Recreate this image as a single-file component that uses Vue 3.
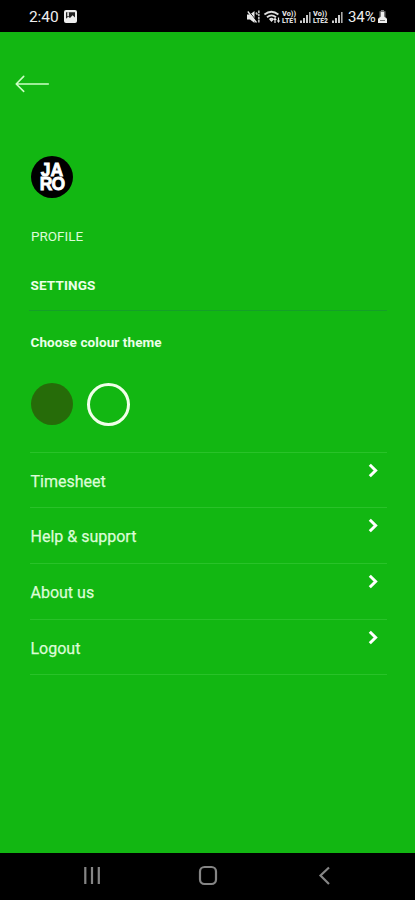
<script setup>
const items = ['Timesheet', 'Help & support', 'About us', 'Logout']
</script>

<template>
  <div class="screen">
    <header class="status">
      <span class="time">2:40</span>
      <svg class="picture" width="13" height="13" viewBox="0 0 13 13">
        <rect width="13" height="13" rx="2" fill="#eee" />
        <path d="M2 2.2h9v5.2L8.6 5.2 6 8 4.2 6.8 2 8.8z" fill="#222" />
        <path d="M3.3 2.2h1.6v4H3.3z" fill="#eee" />
      </svg>
      <svg class="indicators" width="98" height="18" viewBox="0 0 98 18" fill="#e8e8e8">
        <path d="M0 6.5h3L7.5 3v12L3 11.500H0z" />
        <path d="M1.2 2.5 10 13.5" stroke="#000" stroke-width="1" />
        <path d="M0.8 3.5 9.5 14.5" stroke="#e8e8e8" stroke-width="1.3" />
        <path d="M11.8 2.5v12M9 4.5l1.5 2.5" stroke="#bbb" stroke-width="1.7" stroke-dasharray="2.5 .7" />
        <g fill="none" stroke="#ddd" stroke-width="1.8">
          <path d="M17.4 6.5q7-5.5 14 0M20 9.2q4.5-3.7 9 0M22.5 11.6q2-1.6 4 0" />
        </g>
        <path d="M22.5 11.8h4L24.5 14zM28 9.5l1.8 2.5h-1.2v3h-1.2v-3h-1.2zM31.5 15l-1.7-2.5h1.1V9.5h1.2v3h1.1z" />
        <g class="tiny">
          <text x="35" y="8.4" textLength="14" lengthAdjust="spacingAndGlyphs">Vo))</text>
          <text x="35" y="15.2" textLength="15" lengthAdjust="spacingAndGlyphs">LTE1</text>
          <text x="66" y="8.4" textLength="14" lengthAdjust="spacingAndGlyphs">Vo))</text>
          <text x="66" y="15.2" textLength="15" lengthAdjust="spacingAndGlyphs">LTE2</text>
        </g>
        <path d="M53 12.5h2V15h-2zM56 10h2v5h-2zM59 7h2v8h-2zM85 12.5h2V15h-2zM88 10h2v5h-2zM91 7h2v8h-2z" fill="#ccc" />
        <path d="M62 4h1.6v11H62zM94 4h1.6v11H94z" fill="#aaa" />
      </svg>
      <span class="percent">34%</span>
      <svg class="battery" width="9" height="13" viewBox="0 0 9 13">
        <path d="M3 0h3v1.3h1.5V7L9 8.5V13H0V8.5L1.5 7V1.3H3z" fill="#777" />
        <path d="M3 2h3v4.5L9 9v4H0V9l3-2.5z" fill="#eee" />
        <path d="M2 10.5h5" stroke="#777" />
      </svg>
    </header>

    <main class="content">
      <svg class="back" width="36" height="20" viewBox="0 0 36 20" fill="none" stroke="#ccffc5" stroke-width="1.6" stroke-linecap="round" stroke-linejoin="round">
        <path d="M33.3 10H1.2M8.7 2.4 1.2 10l7.5 7.4" />
      </svg>
      <div class="logo"><span>JA</span><span class="lower">RO</span></div>
      <div class="profile">PROFILE</div>
      <div class="settings">SETTINGS</div>
      <div class="choose">Choose colour theme</div>
      <div class="themes">
        <span class="swatch olive"></span>
        <span class="swatch ring"></span>
      </div>
      <ul class="menu">
        <li v-for="item in items" :key="item">
          <span>{{ item }}</span>
          <svg width="11" height="15" viewBox="0 0 11 15" fill="none" stroke="#fff" stroke-width="3">
            <path d="M1.8 1.8 7.6 7.5l-5.8 5.7" />
          </svg>
        </li>
      </ul>
    </main>

    <nav class="navbar">
      <svg width="415" height="47" viewBox="0 0 415 47" fill="none" stroke="#858585" stroke-width="2.2">
        <path d="M85.3 14v17M92 14v17M98.8 14v17" />
        <rect x="200" y="14" width="16" height="17" rx="4.5" />
        <path d="M329 14.5 320.5 22.5l8.5 8.5" />
      </svg>
    </nav>
  </div>
</template>

<style>
body {
  margin: 0;
  background: #000;
}
</style>

<style scoped>
.screen {
  width: 415px;
  height: 900px;
  display: flex;
  flex-direction: column;
  overflow: hidden;
  background: #12b712;
  font-family: Roboto, sans-serif;
  color: #dcfcd7;
}
.status {
  height: 32px;
  flex: none;
  box-sizing: border-box;
  padding-left: 29px;
  display: flex;
  align-items: center;
  background: #000;
  color: #eee;
  font-size: 15.5px;
  line-height: 20px;
}
.time {
  width: 35px;
  padding-top: 2px;
  letter-spacing: -0.1px;
}
.picture {
  margin-top: 1px;
}
.indicators {
  margin-left: 170px;
  margin-top: 1px;
}
.tiny {
  font-size: 7.5px;
  font-weight: 900;
  fill: #ddd;
}
.percent {
  width: 30px;
  margin-left: 3px;
  padding-top: 2px;
  font-size: 15px;
  letter-spacing: -0.1px;
}
.battery {
  margin-top: 1px;
}
.content {
  height: 821px;
  flex: none;
  box-sizing: border-box;
  padding: 42px 28px 0 31px;
}
.back {
  display: block;
  margin-left: -16px;
}
.logo {
  width: 42px;
  height: 42px;
  margin-top: 62px;
  box-sizing: border-box;
  padding-top: 7px;
  border-radius: 50%;
  background: #000;
  color: #fff;
  display: flex;
  flex-direction: column;
  align-items: center;
  font: 700 17.5px/14px "Liberation Sans", sans-serif;
  -webkit-text-stroke: 0.8px #fff;
}
.lower {
  letter-spacing: -0.9px;
}
.profile {
  margin-top: 28px;
  font-size: 13.5px;
  line-height: 20px;
}
.settings {
  height: 36px;
  box-sizing: border-box;
  margin: 29px 0 0 -2px;
  padding-left: 1.5px;
  border-bottom: 1px solid #14a028;
  color: #ebffe8;
  font-size: 13.5px;
  line-height: 20px;
  font-weight: 700;
  letter-spacing: 0.15px;
}
.choose {
  margin-top: 21px;
  margin-left: -0.5px;
  color: #ebffe8;
  font-size: 13.5px;
  line-height: 20px;
  font-weight: 700;
  letter-spacing: 0.1px;
}
.themes {
  display: flex;
  gap: 14px;
  margin-top: 31px;
}
.swatch {
  width: 42px;
  height: 42px;
  box-sizing: border-box;
  border-radius: 50%;
}
.olive {
  background: #266c09;
}
.ring {
  width: 43px;
  height: 43px;
  border: 3px solid #f0ffe9;
}
.menu {
  margin: 25.6px 0 0 -1px;
  padding: 0;
  list-style: none;
  border-top: 1px solid #29c229;
}
.menu li {
  height: 55.7px;
  box-sizing: border-box;
  padding: 18px 8px 0 0.5px;
  display: flex;
  justify-content: space-between;
  border-bottom: 1px solid #29c229;
  font-size: 16px;
  line-height: 21px;
  -webkit-text-stroke: 0.25px #dcfcd7;
}
.menu svg {
  margin-top: -8px;
}
.navbar {
  height: 47px;
  flex: none;
  background: #000;
}
.navbar svg {
  display: block;
}
</style>
